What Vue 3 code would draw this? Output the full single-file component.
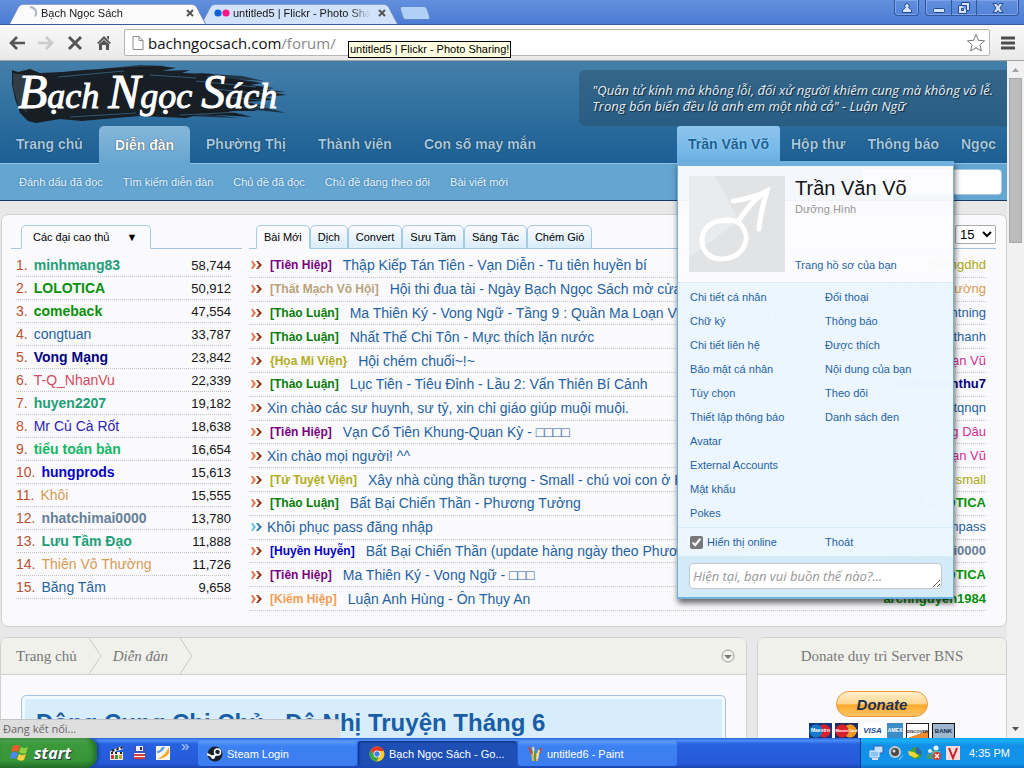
<script setup>
import { ref } from 'vue'

const mainNav = ['Trang chủ', 'Diễn đàn', 'Phường Thị', 'Thành viên', 'Con số may mắn']
const userNav = ['Trần Văn Võ', 'Hộp thư', 'Thông báo', 'Ngọc']
const subNav = ['Đánh dấu đã đọc', 'Tìm kiếm diễn đàn', 'Chủ đề đã đọc', 'Chủ đề đang theo dõi', 'Bài viết mới']
const tabs = ['Bài Mới', 'Dịch', 'Convert', 'Sưu Tầm', 'Sáng Tác', 'Chém Gió']

const members = [
  { name: 'minhmang83', score: '58,744', cls: 'teal' },
  { name: 'LOLOTICA', score: '50,912', cls: 'green' },
  { name: 'comeback', score: '47,554', cls: 'green' },
  { name: 'congtuan', score: '33,787', cls: 'blue' },
  { name: 'Vong Mạng', score: '23,842', cls: 'navy' },
  { name: 'T-Q_NhanVu', score: '22,339', cls: 'rose' },
  { name: 'huyen2207', score: '19,182', cls: 'teal' },
  { name: 'Mr Củ Cà Rốt', score: '18,638', cls: 'indigo' },
  { name: 'tiểu toán bàn', score: '16,654', cls: 'mint' },
  { name: 'hungprods', score: '15,613', cls: 'royal' },
  { name: 'Khôi', score: '15,555', cls: 'tan' },
  { name: 'nhatchimai0000', score: '13,780', cls: 'slate' },
  { name: 'Lưu Tầm Đạo', score: '11,888', cls: 'teal' },
  { name: 'Thiên Vô Thường', score: '11,726', cls: 'tan' },
  { name: 'Băng Tâm', score: '9,658', cls: 'blue' },
]

const topics = [
  { prefix: '[Tiên Hiệp]', pc: 'purple', title: 'Thập Kiếp Tán Tiên - Vạn Diễn - Tu tiên huyền bí', user: 'hoangdhd', uc: 'olive' },
  { prefix: '[Thất Mạch Võ Hội]', pc: 'khaki', title: 'Hội thi đua tài - Ngày Bạch Ngọc Sách mở cửa', user: 'Thiên Vô Thường', uc: 'tan' },
  { prefix: '[Thảo Luận]', pc: 'forest', title: 'Ma Thiên Ký - Vong Ngữ - Tầng 9 : Quần Ma Loạn Vũ - Man Hoang Đại Lục', user: 'LordofLightning', uc: 'blue' },
  { prefix: '[Thảo Luận]', pc: 'forest', title: 'Nhất Thế Chi Tôn - Mực thích lặn nước', user: 'minthanh', uc: 'blue' },
  { prefix: '{Họa Mi Viện}', pc: 'gold', title: 'Hội chém chuối~!~', user: 'Nhạn Vũ', uc: 'pink' },
  { prefix: '[Thảo Luận]', pc: 'forest', title: 'Lục Tiên - Tiêu Đỉnh - Lầu 2: Vấn Thiên Bí Cảnh', user: 'kethattinhthu7', uc: 'navy' },
  { title: 'Xin chào các sư huynh, sư tỷ, xin chỉ giáo giúp muội muội.', user: 'soditimbatqnqn', uc: 'blue' },
  { prefix: '[Tiên Hiệp]', pc: 'purple', title: 'Vạn Cổ Tiên Khung-Quan Kỳ - □□□□', user: 'Sùng Dâu', uc: 'pink' },
  { title: 'Xin chào mọi người! ^^', user: 'Nhạn Vũ', uc: 'pink' },
  { prefix: '[Tứ Tuyệt Viện]', pc: 'gold', title: 'Xây nhà cùng thần tượng - Small - chú voi con ở Bản Đôn nhỏ nhỏ', user: 'small', uc: 'olive' },
  { prefix: '[Thảo Luận]', pc: 'forest', title: 'Bất Bại Chiến Thần - Phương Tưởng', user: 'LOLOTICA', uc: 'green' },
  { title: 'Khôi phục pass đăng nhập', user: 'compass', uc: 'blue', read: true },
  { prefix: '[Huyền Huyễn]', pc: 'royal', title: 'Bất Bại Chiến Thần (update hàng ngày theo Phương Tưởng)', user: 'nhatchimai0000', uc: 'slate' },
  { prefix: '[Tiên Hiệp]', pc: 'purple', title: 'Ma Thiên Ký - Vong Ngữ - □□□', user: 'LOLOTICA', uc: 'green' },
  { prefix: '[Kiếm Hiệp]', pc: 'orange', title: 'Luận Anh Hùng - Ôn Thụy An', user: 'archnguyen1984', uc: 'green' },
]

const menuLeft = ['Chi tiết cá nhân', 'Chữ ký', 'Chi tiết liên hệ', 'Bảo mật cá nhân', 'Tùy chọn', 'Thiết lập thông báo', 'Avatar', 'External Accounts', 'Mật khẩu', 'Pokes']
const menuRight = ['Đối thoại', 'Thông báo', 'Được thích', 'Nội dung của bạn', 'Theo dõi', 'Danh sách đen']

const url = ref('')
const online = ref(true)
const status = ref('')
const search = ref('')
</script>

<template>
  <div class="screen">
    <header class="tabstrip">
      <div class="btab active">
        <svg class="spin" width="16" height="16" viewBox="0 0 16 16"><path d="M8 2a6 6 0 0 1 5 9.500" fill="none" stroke="#a9b6c8" stroke-width="2" /></svg>
        <span class="btitle">Bạch Ngọc Sách</span>
        <button class="bclose" aria-label="Đóng thẻ"><svg width="8" height="8" viewBox="0 0 8 8"><path d="M1 1l6 6M7 1L1 7" stroke="#555" stroke-width="2" /></svg></button>
      </div>
      <div class="btab">
        <svg class="flickr" width="16" height="8" viewBox="0 0 16 8"><circle cx="4" cy="4" r="3.600" fill="#0b63d8" /><circle cx="12" cy="4" r="3.600" fill="#f81484" /></svg>
        <span class="btitle fade">untitled5 | Flickr - Photo Sharing!</span>
        <button class="bclose" aria-label="Đóng thẻ"><svg width="8" height="8" viewBox="0 0 8 8"><path d="M1 1l6 6M7 1L1 7" stroke="#555" stroke-width="2" /></svg></button>
      </div>
      <button class="newtab" aria-label="Thẻ mới"></button>
      <div class="winbtns">
        <button class="user" aria-label="Người dùng"><svg width="12" height="12" viewBox="0 0 12 12"><path d="M6 1.500a2.300 2.300 0 0 1 1.500 4l3 2.500v2.500h-9V8l3-2.500A2.300 2.300 0 0 1 6 1.500z" fill="#d6e3fb" stroke="#234a8c" /></svg></button>
        <div class="group">
          <button aria-label="Thu nhỏ"><svg width="14" height="14" viewBox="0 0 14 14"><rect x="1.500" y="7.500" width="11" height="4" rx="1" fill="#d6e3fb" stroke="#234a8c" /></svg></button>
          <button aria-label="Khôi phục"><svg width="14" height="14" viewBox="0 0 14 14"><path d="M4.500 1.500h8v8h-3v3h-8v-8h3z" fill="#d6e3fb" stroke="#234a8c" /><path d="M9.500 9.500v-5h-5M4.500 7.500h2v2h-2z" fill="#6f98e4" stroke="#234a8c" /></svg></button>
          <button class="x" aria-label="Đóng"><svg width="14" height="14" viewBox="0 0 14 14"><path d="M2 2.500h3.500L7 4.500l1.500-2H12L9 7l3 4.500H8.500L7 9.500l-1.500 2H2L5 7z" fill="#d6e3fb" stroke="#234a8c" /></svg></button>
        </div>
      </div>
    </header>

    <div class="toolbar">
      <button aria-label="Quay lại"><svg width="18" height="18" viewBox="0 0 18 18"><path d="M17 9H4M9 3L3 9l6 6" fill="none" stroke="#555" stroke-width="2.600" /></svg></button>
      <button aria-label="Tiến"><svg width="18" height="18" viewBox="0 0 18 18"><path d="M1 9h13M9 3l6 6-6 6" fill="none" stroke="#cbcbcb" stroke-width="2.600" /></svg></button>
      <button aria-label="Dừng"><svg width="18" height="18" viewBox="0 0 18 18"><path d="M3 3l12 12M15 3L3 15" stroke="#555" stroke-width="3" /></svg></button>
      <button aria-label="Trang chủ"><svg width="18" height="18" viewBox="0 0 18 18"><path d="M9 2l7 7-1.500 1L9 5l-5.500 5L2 9zM12 2h2v4l-2-2zM4 10l5-4 5 4v6h-3v-5H7v5H4z" fill="#555" /></svg></button>
      <label class="omnibox">
        <svg width="14" height="16" viewBox="0 0 14 16"><path d="M2 1.500h6l4 4v9H2zM8 1.500v4h4" fill="#fff" stroke="#8b8b8b" /></svg>
        <span class="url">bachngocsach.com<i>/forum/</i></span>
        <input v-model="url" type="text" aria-label="Địa chỉ">
        <svg width="20" height="20" viewBox="0 0 20 20"><path d="M10 1.500l2.400 5.800 6.200.5-4.700 4.100 1.500 6.100-5.400-3.300L4.600 18l1.500-6.100-4.700-4.100 6.200-.5z" fill="#fff" stroke="#777" /></svg>
      </label>
      <button aria-label="Trình đơn"><svg width="14" height="14" viewBox="0 0 14 14"><path d="M1 2h12M1 7h12M1 12h12" stroke="#4d4d4d" stroke-width="3" stroke-linecap="round" /></svg></button>
    </div>
    <div class="tooltip" role="tooltip">untitled5 | Flickr - Photo Sharing!</div>

    <div class="viewport">
      <div class="page">
        <div class="head">
          <div class="brand">
            <svg class="logo" width="290" height="64" viewBox="0 0 290 64">
              <path d="M12 9L18 11L30 8L40 12L62 11L84 9L120 7L160 5L176 7L162 10L190 9L182 12L214 13L206 16L236 18L262 22L250 24L274 27L256 29L287 34L262 36L276 39L244 41L268 45L232 45L258 50L228 50L252 56L200 53L186 57L140 55L104 58L82 60L60 58L36 62L28 60L20 52L15 38L12 24Z" fill="#15181b" opacity=".93" />
              <path d="M100 8l40-4 26 1-20 3zM196 12l46 3 22 5-50-3zM232 24l54 7-40 2zM196 50l40 1-20 3 22 3-52-2zM232 42l36 5 18 5-50-5z" fill="#15181b" opacity=".7" />
              <path d="M58 16l66-6M150 14l46 3M196 20l60 6M206 27l66 7M180 54l60-3M70 56l66-4M226 36l46 4" stroke="#447fa9" stroke-width="1" opacity=".6" />
              <path d="M13 12l12 2 2 38-9-8-5-18z" fill="#4a5963" opacity=".5" />
              <text x="18" y="47" class="logotext"><tspan class="cap">B</tspan>ạch <tspan class="cap">N</tspan>gọc <tspan class="cap">S</tspan>ách</text>
            </svg>
            <blockquote>"Quân tử kính mà không lỗi, đối xử người khiêm cung mà không vô lễ.<br>Trong bốn biển đều là anh em một nhà cả" - Luận Ngữ</blockquote>
          </div>
          <nav class="nav">
            <a v-for="(item, i) in mainNav" :key="item" href="#" :class="{ current: i === 1 }">{{ item }}</a>
            <span class="spacer"></span>
            <div v-for="(item, i) in userNav" :key="item" class="userlink" :class="{ open: i === 0 }">
              <a href="#">{{ item }}</a>
              <section v-if="i === 0" class="menu">
                <div class="profile">
                  <svg class="avatar" width="96" height="96" viewBox="0 0 96 96">
                    <rect width="96" height="96" fill="#e2e3e5" />
                    <path d="M0 0h26l24 44L0 82z" fill="#eaebed" />
                    <path d="M36 44c18-2 26 16 18 28-8 13-30 15-38 3-9-14 2-34 24-30M50 44c7-10 16-22 27-29M44 25c13-2 24-5 34-10-4 13-7 25-8 38" fill="none" stroke="#fff" stroke-width="5" stroke-linecap="round" />
                  </svg>
                  <div class="who">
                    <h3>Trần Văn Võ</h3>
                    <span>Dưỡng Hình</span>
                    <a href="#">Trang hồ sơ của bạn</a>
                  </div>
                </div>
                <div class="links">
                  <ul><li v-for="l in menuLeft" :key="l"><a href="#">{{ l }}</a></li></ul>
                  <ul><li v-for="l in menuRight" :key="l"><a href="#">{{ l }}</a></li></ul>
                </div>
                <div class="links last">
                  <label><input v-model="online" type="checkbox"> Hiển thị online</label>
                  <a href="#">Thoát</a>
                </div>
                <div class="statusbox">
                  <textarea v-model="status" placeholder="Hiện tại, bạn vui buồn thế nào?..." aria-label="Trạng thái"></textarea>
                </div>
              </section>
            </div>
          </nav>
        </div>
        <nav class="subnav">
          <a v-for="item in subNav" :key="item" href="#">{{ item }}</a>
          <input v-model="search" type="search" aria-label="Tìm kiếm">
        </nav>

        <main>
          <section class="card board">
            <div class="rank">
              <div class="tabrow"><button class="tab on pick">Các đại cao thủ <span>▼</span></button></div>
              <ol>
                <li v-for="(m, i) in members" :key="m.name">
                  <span class="num">{{ i + 1 }}.</span>
                  <a href="#" :class="m.cls">{{ m.name }}</a>
                  <span class="score">{{ m.score }}</span>
                </li>
              </ol>
            </div>
            <div class="latest">
              <div class="tabrow">
                <button v-for="(t, i) in tabs" :key="t" class="tab" :class="{ on: i === 0 }">{{ t }}</button>
                <span class="pagesize"><select aria-label="Số bài"><option>15</option></select></span>
              </div>
              <ul>
                <li v-for="(t, i) in topics" :key="i">
                  <svg width="12" height="8" viewBox="0 0 12 8" :class="{ read: t.read }"><path class="a" d="M1 0h2l3 4-3 4H1l2-4z" /><path class="b" d="M6 0h2l4 4-4 4H6l3-4z" /></svg>
                  <a v-if="t.prefix" href="#" class="prefix" :class="t.pc">{{ t.prefix }}</a>
                  <a href="#" class="title">{{ t.title }}</a>
                  <a href="#" class="poster" :class="t.uc">{{ t.user }}</a>
                </li>
              </ul>
            </div>
          </section>

          <div class="lower">
            <section class="card forum">
              <div class="crumbs">
                <a href="#">Trang chủ</a>
                <svg width="14" height="36" viewBox="0 0 14 36"><path d="M1 0l12 18L1 36" fill="none" stroke="#c9c9c9" /></svg>
                <a href="#"><i>Diễn đàn</i></a>
                <svg width="14" height="36" viewBox="0 0 14 36"><path d="M1 0l12 18L1 36" fill="none" stroke="#c9c9c9" /></svg>
                <button aria-label="Mở rộng"><svg width="14" height="14" viewBox="0 0 14 14"><circle cx="7" cy="7" r="6" fill="none" stroke="#999" /><path d="M3 6h8L7 10z" fill="#777" /></svg></button>
              </div>
              <div class="notice"><h2>Đông Cung Chi Chủ - Đệ Nhị Truyện Tháng 6</h2></div>
            </section>
            <aside class="card donate">
              <h4>Donate duy trì Server BNS</h4>
              <button class="paypal">Donate</button>
              <div class="cards">
                <span class="maestro">Maestro</span>
                <span class="master">MasterCard</span>
                <span class="visa">VISA</span>
                <span class="amex">AMEX</span>
                <span class="disc">DISCOVER</span>
                <span class="bank">BANK</span>
              </div>
            </aside>
          </div>
        </main>
      </div>
      <div class="scroll">
        <svg width="17" height="17" viewBox="0 0 17 17"><path d="M5 11h7L8.500 7z" fill="#a3a3a3" /></svg>
        <div class="thumb"></div>
        <svg width="17" height="17" viewBox="0 0 17 17"><path d="M5 6h7l-3.500 4z" fill="#505050" /></svg>
      </div>
      <div class="loading">Đang kết nối...</div>
    </div>

    <footer class="taskbar">
      <button class="start">
        <svg width="20" height="20" viewBox="0 0 20 20"><path d="M3 3q3-2 7 0L8 9Q5 7 1 9z" fill="#ee5a2c" /><path d="M11 4q3 2 7 0l-2 6q-4 2-7-1z" fill="#8ed13b" /><path d="M1 10q3-2 7 0l-2 6q-3-2-6 0z" fill="#4c86ee" /><path d="M9 11q3 2 7 0l-2 6q-4 2-7-1z" fill="#fbd13a" /></svg>
        start
      </button>
      <div class="quick">
        <svg width="16" height="16" viewBox="0 0 16 16"><path d="M1 6l12-5 1 3L2 8zM1 7h13v8H1z" fill="#eee" /><path d="M2 6l2-2 2 1-2 2zM7 4l2-2 1 2-2 2zM11 2l2-1 1 2-2 1zM2 7h2v2H2zM6 7h2v2H6zM11 7h2v2h-2z" fill="#222" /><path d="M2 10h3v4H2z" fill="#d33" /><path d="M6 10h3v4H6z" fill="#393" /><path d="M10 10h3v4h-3z" fill="#c93" /></svg>
        <svg width="16" height="16" viewBox="0 0 16 16"><path d="M1 1h13v14H1z" fill="#3a53c4" /><path d="M4 1h7v5H4z" fill="#eef" /><path d="M8 2h2v3H8z" fill="#234" /><path d="M2 8h11v6H2z" fill="#fff" /><path d="M2 9h11v2H2zM2 12h11v2H2z" fill="#d43d36" /></svg>
        <svg width="16" height="16" viewBox="0 0 16 16"><rect x="1" y="1" width="14" height="14" fill="#f8f6ec" /><path d="M2 14Q9 12 14 2v6q-4 6-12 6z" fill="#f1a72e" /><path d="M2 8q5 0 8-6H7Q5 6 2 6z" fill="#5b9ee8" /></svg>
        <span>»</span>
      </div>
      <div class="tasks">
        <button>
          <svg width="16" height="16" viewBox="0 0 16 16"><circle cx="8" cy="8" r="7.500" fill="#18202c" /><circle cx="10.500" cy="6" r="3" fill="none" stroke="#fff" stroke-width="1.500" /><path d="M0 8l6 3 4-3" stroke="#fff" stroke-width="2" fill="none" /><circle cx="6" cy="11" r="2" fill="#fff" /></svg>
          Steam Login
        </button>
        <button class="down">
          <svg width="16" height="16" viewBox="0 0 16 16"><circle cx="8" cy="8" r="7.500" fill="#f7c92f" /><path d="M1.500 4.300A7.500 7.500 0 0 1 15 5H8L5 9z" fill="#e2382b" /><path d="M1.500 4.300A7.500 7.500 0 0 0 7.500 15.500L11 9H5z" fill="#37a346" /><circle cx="8" cy="8" r="3.500" fill="#fff" /><circle cx="8" cy="8" r="2.700" fill="#3f7fe0" /></svg>
          Bạch Ngọc Sách - Go...
        </button>
        <button>
          <svg width="16" height="16" viewBox="0 0 16 16"><path d="M4 7h8l-1 8H5z" fill="#dcae71" /><path d="M5 8L2 1M12 8l2-6" stroke="#c9492e" stroke-width="2" /><path d="M7 8L6 1M10 13l2-9" stroke="#e9e3a0" stroke-width="2" /><path d="M8 15V5" stroke="#5d9b43" stroke-width="2" /></svg>
          untitled6 - Paint
        </button>
      </div>
      <div class="tray">
        <svg width="16" height="16" viewBox="0 0 16 16"><path d="M5 1h9v7H5z" fill="#bfe0ff" stroke="#2d5fae" /><path d="M1 6h9v6H1z" fill="#8cc4fa" stroke="#e8f3ff" /><path d="M3 14h6" stroke="#dde" stroke-width="2" /></svg>
        <svg width="16" height="16" viewBox="0 0 16 16"><circle cx="7" cy="7" r="6" fill="#c9c9c9" /><circle cx="7" cy="7" r="4" fill="#4a4a4a" /><circle cx="6" cy="6" r="1.500" fill="#ddd" /><path d="M11 15l4-5" stroke="#9cc8f3" stroke-width="1" /></svg>
        <svg width="16" height="16" viewBox="0 0 16 16"><circle cx="9" cy="8" r="6" fill="#36a13a" /><path d="M9 2a6 6 0 0 1 5 8l-5-2z" fill="#2e62bd" /><path d="M1 6l6 1 5 4-4 2-6-3z" fill="#f2d737" /></svg>
        <svg width="16" height="16" viewBox="0 0 16 16"><circle cx="10" cy="3" r="2.500" fill="#e7f4ef" /><path d="M6 6h8v5H6z" fill="#66b7a1" /><circle cx="4" cy="6" r="2" fill="#e7f4ef" /><path d="M1 9h7v5H1z" fill="#4a9c75" /><circle cx="11" cy="11" r="4" fill="#e0352b" /><path d="M9 9l4 4M13 9l-4 4" stroke="#fff" stroke-width="1.500" /></svg>
        <svg width="16" height="16" viewBox="0 0 16 16"><rect x="1" y="1" width="14" height="14" fill="#f9dcdc" /><path d="M4 3l4 10 4-10" fill="none" stroke="#c8202e" stroke-width="2" /></svg>
        <time>4:35 PM</time>
      </div>
    </footer>
  </div>
</template>

<style>
body {
  margin: 0;
  overflow: hidden;
}
</style>

<style scoped>
.screen {
  position: relative;
  display: flex;
  flex-direction: column;
  height: 100vh;
  font-family: 'Liberation Sans', Arial, sans-serif;
  font-size: 11px;
  color: #141414;
}
.screen * {
  box-sizing: border-box;
}
svg {
  display: block;
  flex: none;
}
a {
  color: #1f62a0;
  text-decoration: none;
}
button {
  font: inherit;
  border: 0;
  padding: 0;
  background: none;
}
ul,
ol {
  list-style: none;
  margin: 0;
  padding: 0;
}

/* browser frame */
.tabstrip {
  display: flex;
  flex: none;
  height: 25px;
  padding-left: 4px;
  background: linear-gradient(#6390dd, #4b7bd4);
  border-bottom: 1px solid #35599b;
}
.btab {
  position: relative;
  z-index: 1;
  display: flex;
  align-items: center;
  gap: 3px;
  width: 204px;
  height: 24px;
  padding: 2px 10px 0 18px;
}
.btab::before {
  content: '';
  position: absolute;
  inset: 1px 2px 0 5px;
  z-index: -1;
  background: #d3e2fb;
  border: 1px solid #6a87bd;
  border-bottom: 0;
  border-radius: 5px 5px 0 0;
  transform: perspective(40px) rotateX(12deg);
  transform-origin: bottom;
}
.btab.active {
  z-index: 2;
}
.btab.active::before {
  background: #fbfbfc;
}
.btab:nth-child(2) {
  margin-left: -12px;
}
.btitle {
  flex: 1;
  overflow: hidden;
  white-space: nowrap;
}
.fade {
  mask-image: linear-gradient(90deg, #000 85%, transparent);
}
.bclose {
  padding: 4px;
}
.newtab {
  width: 28px;
  height: 14px;
  margin: 6px 0 0 1px;
  background: #b1d0f7;
  border: 1px solid #5f86c8;
  border-radius: 3px;
  transform: skewX(18deg);
}
.winbtns {
  display: flex;
  gap: 6px;
  margin: 0 5px 0 auto;
  height: 16px;
}
.winbtns button {
  display: grid;
  place-items: center;
  width: 25px;
}
.user,
.group {
  border: 1px solid #2f579e;
  border-top: 0;
  border-radius: 0 0 4px 4px;
  box-shadow: inset 0 0 0 1px #7ea4ea;
}
.group {
  display: flex;
}
.group button + button {
  border-left: 1px solid #2f579e;
}
.winbtns .x {
  width: 42px;
}
.toolbar {
  display: flex;
  align-items: center;
  flex: none;
  gap: 11px;
  height: 36px;
  padding: 0 9px 0 8px;
  background: linear-gradient(#f9f9f9, #e9e9e9);
  border-bottom: 1px solid #a2a2a2;
}
.omnibox {
  display: flex;
  flex: 1;
  align-items: center;
  gap: 3px;
  height: 27px;
  padding: 0 3px 0 6px;
  background: #fff;
  border: 1px solid #b5b5b5;
  border-radius: 2px;
  font-family: 'Open Sans', sans-serif;
  font-size: 15px;
  color: #111;
}
.url i {
  font-style: normal;
  color: #888;
}
.omnibox input {
  flex: 1;
  min-width: 0;
  border: 0;
  outline: 0;
  background: none;
}
.tooltip {
  position: absolute;
  left: 348px;
  top: 41px;
  z-index: 20;
  padding: 0 1px;
  border: 1px solid #000;
  background: #ffffe1;
  line-height: 15px;
  color: #000;
}

.viewport {
  position: relative;
  display: flex;
  flex: 1;
  min-height: 0;
  overflow: hidden;
}
.page {
  flex: 1;
  min-width: 0;
  background: #e8e8e8;
}
.scroll {
  display: flex;
  flex-direction: column;
  width: 17px;
  background: #f1f1f1;
}
.scroll .thumb {
  height: 165px;
  margin: 0 2px auto;
  background: #bcbcbc;
  border: 1px solid #a8a8a8;
}

/* site header */
.head {
  background: linear-gradient(#447fa9, #1b5f94);
}
.brand {
  display: flex;
  justify-content: space-between;
  height: 65px;
}
.logotext {
  font: italic 36px 'Liberation Serif', serif;
  fill: #fff;
  stroke: #fff;
}
.cap {
  font-size: 48px;
}
blockquote {
  margin: 9px 0 0;
  padding: 12px 14px 12px 13px;
  border-radius: 6px 0 0 6px;
  background: rgba(40, 80, 108, 0.5);
  color: #e6f1f8;
  font: italic 13px/16px 'Open Sans', sans-serif;
  text-shadow: 1px 1px 1px #123;
  white-space: nowrap;
}
.nav {
  display: flex;
  height: 38px;
  border-bottom: 1px solid #8bc1e6;
  font-size: 14px;
  font-weight: bold;
  line-height: 36px;
}
.nav > a {
  padding: 0 16px;
  color: #a5cae4;
  text-shadow: 0 0 1px #000;
}
.nav > a.current {
  height: 39px;
  padding-top: 1px;
  border-radius: 5px 5px 0 0;
  background: linear-gradient(#86b7da, #65a5d1);
  color: #fff;
}
.spacer {
  flex: 1;
}
.userlink {
  position: relative;
}
.userlink > a {
  display: block;
  padding: 0 11px;
  color: #a5cae4;
  text-shadow: 0 0 1px #000;
}
.userlink.open > a {
  background: linear-gradient(#8cc5ee, #6cb2e4);
  border-radius: 3px 3px 0 0;
  color: #176093;
  text-shadow: 0 0 2px #b8e0fb;
}
.subnav {
  display: flex;
  align-items: center;
  gap: 20px;
  height: 37px;
  padding: 0 5px 0 19px;
  background: #65a5d1;
  border-bottom: 1px solid #143b62;
}
.subnav a {
  color: #eaf5fc;
  text-shadow: 0 0 2px #2b6b99;
}
.subnav input {
  width: 140px;
  height: 26px;
  margin-left: auto;
  border: 1px solid #a5cae4;
  border-radius: 4px;
  background: #fff;
}

/* profile drop-down */
.menu {
  position: absolute;
  left: 0;
  top: 35px;
  z-index: 10;
  width: 277px;
  border: solid #6fb0de;
  border-width: 5px 1px 2px;
  background: rgba(252, 252, 255, 0.95);
  box-shadow: 1px 4px 6px rgba(0, 0, 0, 0.6);
  font-size: 11px;
  font-weight: normal;
  line-height: 24px;
}
.profile {
  display: flex;
  gap: 10px;
  padding: 10px 11px;
  border-bottom: 1px solid #d7edfc;
}
.who {
  display: flex;
  flex-direction: column;
  line-height: 14px;
}
.who h3 {
  margin: 0 0 2px;
  font-size: 20px;
  font-weight: normal;
  line-height: 24px;
}
.who span {
  color: #969696;
}
.who a {
  margin-top: auto;
}
.links {
  display: grid;
  grid-template-columns: 135px 1fr;
  padding: 2px 12px;
  background: rgba(230, 244, 255, 0.7);
  border-bottom: 1px solid #d7edfc;
}
.links label {
  display: flex;
  align-items: center;
  gap: 4px;
  color: #1f62a0;
}
.links input {
  width: 13px;
  height: 13px;
  margin: 0;
  accent-color: #777;
}
.statusbox {
  padding: 6px 11px 8px;
  background: #d3eaf8;
}
textarea {
  display: block;
  width: 100%;
  height: 26px;
  padding: 3px;
  border: 1px solid #c0c8ce;
  border-radius: 4px;
  font: italic 13px/18px 'Open Sans', sans-serif;
}
textarea::placeholder {
  color: #969696;
}

/* content */
main {
  padding: 13px 0 0 1px;
}
.card {
  background: #fafafd;
  border: 1px solid #d0d0d0;
  border-radius: 7px;
}
.board {
  display: flex;
  gap: 7px;
  padding: 10px 10px 15px 9px;
}
.rank {
  width: 231px;
}
.latest {
  flex: 1;
  min-width: 0;
}
.tabrow {
  display: flex;
  height: 24px;
  padding: 0 0 0 10px;
  border-bottom: 1px solid #a5c5dd;
}
.tab {
  height: 24px;
  padding: 0 7px;
  border: 1px solid #a5cae4;
  border-radius: 5px 5px 0 0;
  background: linear-gradient(#fafafd, #d9edfb);
}
.tab.on {
  border-bottom-color: #fafafd;
  background: #fafafd;
}
.latest .tabrow {
  padding-left: 7px;
}
.tab.pick {
  padding: 0 13px 0 11px;
}
.pick span {
  margin-left: 14px;
}
.pagesize {
  margin-left: auto;
}
select {
  display: block;
  width: 41px;
  height: 19px;
  padding: 0;
  border: 1px solid #aaa;
  border-radius: 2px;
  background: #fff;
  font: 13px 'Liberation Sans', sans-serif;
}
.rank ol {
  padding: 5px 11px 0 5px;
}
.rank li {
  display: flex;
  gap: 6px;
  height: 23px;
  border-bottom: 1px dotted #c4c4c4;
  font-size: 14px;
  line-height: 23px;
}
.num {
  color: #b8512c;
}
.score {
  margin-left: auto;
  font-size: 13px;
}
.latest ul {
  display: flex;
  flex-direction: column;
  min-height: 362px;
  padding: 5px 10px 0 1px;
}
.latest li {
  display: flex;
  flex: 1;
  align-items: center;
  border-bottom: 1px dotted #c4c4c4;
  font-size: 14px;
  line-height: 22px;
  white-space: nowrap;
}
.latest li svg {
  margin-right: 5px;
}
.a {
  fill: #e08055;
}
.b {
  fill: #8d3519;
}
.read .a {
  fill: #6cc4e4;
}
.read .b {
  fill: #2a7ba6;
}
.prefix {
  margin: 0 11px 0 3px;
  font-size: 12px;
  font-weight: bold;
}
.poster {
  margin-left: auto;
  font-size: 13px;
}
.teal { color: #1f9e78; font-weight: bold; }
.green { color: #099009; font-weight: bold; }
.navy { color: #000080; font-weight: bold; }
.mint { color: #12b863; font-weight: bold; }
.royal { color: #0202c6; font-weight: bold; }
.slate { color: #667f99; font-weight: bold; }
.rose { color: #d2495f; }
.indigo { color: #2d22b0; }
.tan { color: #d79b53; }
.olive { color: #a9aa12; }
.pink { color: #d22f97; }
.purple { color: #78007c; }
.khaki { color: #b9a27c; }
.forest { color: #087d08; }
.gold { color: #b1ae17; }
.orange { color: #f49d50; }

.lower {
  display: flex;
  gap: 10px;
  margin-top: 10px;
}
.forum {
  flex: 1;
  margin-left: -1px;
  overflow: hidden;
}
.crumbs,
.donate h4 {
  display: flex;
  align-items: center;
  height: 37px;
  margin: 0;
  background: #f1f1ec;
  border-bottom: 1px solid #d0d0d0;
  font: 15px 'Liberation Serif', serif;
}
.crumbs {
  gap: 11px;
  padding: 0 11px 0 15px;
}
.crumbs a,
.donate h4 {
  color: #777;
}
.crumbs button {
  margin-left: auto;
}
.notice {
  height: 80px;
  margin: 20px;
  padding: 12px 14px;
  border: 1px solid #a5c5dd;
  border-radius: 5px;
  background: #d7edfc;
  box-shadow: inset 0 0 0 3px #f2f9fe;
}
h2 {
  margin: 0;
  font-size: 24px;
  line-height: 30px;
  color: #1a5ea6;
  white-space: nowrap;
}
.donate {
  display: flex;
  flex-direction: column;
  align-items: center;
  width: 250px;
  overflow: hidden;
}
.donate h4 {
  align-self: stretch;
  justify-content: center;
}
.paypal {
  width: 92px;
  height: 26px;
  margin: 16px 0 6px;
  border: 1px solid #e9973a;
  border-radius: 13px;
  background: linear-gradient(#fff0cf, #fdd48b 48%, #fba92b 55%, #fdc566);
  color: #1d3052;
  font-size: 15px;
  font-weight: bold;
  font-style: italic;
}
.cards {
  display: flex;
  gap: 3px;
}
.cards span {
  width: 23px;
  height: 16px;
  color: #fff;
  font-size: 5px;
  font-weight: bold;
  line-height: 15px;
  text-align: center;
}
.maestro { background: radial-gradient(circle at 7px 8px, #1678c8 6px, transparent 7px), radial-gradient(circle at 15px 8px, #d8202c 6px, #12357c 7px); }
.cards .master { font-size: 4px; background: radial-gradient(circle at 7px 8px, #d8202c 6px, transparent 7px), radial-gradient(circle at 15px 8px, #f19a22 6px, #222c62 7px); }
.cards .visa { background: #fff; color: #1a4b94; font-size: 8px; font-style: italic; }
.cards .amex { width: 16px; background: #3c8dc6; }
.cards .disc { border: 1px solid #222; background: linear-gradient(160deg, #fff 65%, #ef8a2f 66%); color: #222; font-size: 4px; }
.cards .bank { border: 1px solid #111; background: #9fb7cd; color: #14294a; font-size: 6px; }
.loading {
  position: absolute;
  left: 0;
  bottom: 0;
  width: 340px;
  height: 19px;
  padding-left: 3px;
  border-top: 1px solid #c4c4c4;
  border-radius: 0 4px 0 0;
  background: #dedede;
  color: #666;
  font-family: 'Open Sans', sans-serif;
  line-height: 17px;
}

/* XP taskbar */
.taskbar {
  display: flex;
  flex: none;
  height: 30px;
  background: linear-gradient(#2a62d8, #4b8ef5 8%, #2762e0 20%, #2459d8 85%, #1b44ae);
  color: #fff;
}
.start {
  display: flex;
  align-items: center;
  gap: 4px;
  width: 97px;
  padding-left: 10px;
  border-radius: 0 10px 12px 0;
  background: linear-gradient(#5fae5c, #3c9a3a 20%, #37963a 75%, #24702a);
  box-shadow: inset -3px 0 5px #236c25, 2px 0 3px #1742a0;
  color: #fff;
  font-family: 'Open Sans', sans-serif;
  font-size: 16px;
  font-weight: bold;
  font-style: italic;
  text-shadow: 1px 1px 1px #234;
}
.quick {
  display: flex;
  align-items: center;
  gap: 7px;
  width: 101px;
  padding-left: 12px;
}
.quick span {
  align-self: flex-start;
  margin-left: 3px;
  font-size: 15px;
  line-height: 16px;
  color: #bcd4fb;
}
.tasks {
  display: flex;
  flex: 1;
  gap: 1px;
  padding: 3px 0 2px;
}
.tasks button {
  display: flex;
  align-items: center;
  gap: 4px;
  width: 159px;
  padding-left: 9px;
  border-radius: 3px;
  background: linear-gradient(#5d9bfb, #3c81f3 20%, #3b7df0);
  color: #fff;
}
.tasks .down {
  padding-left: 11px;
  background: #1e4fb5;
  box-shadow: inset 1px 1px 2px #0e2f7c;
}
.tray {
  display: flex;
  align-items: center;
  gap: 3px;
  width: 164px;
  padding-left: 8px;
  border-left: 1px solid #0c3f92;
  background: linear-gradient(#16a0ee, #19b0f5 8%, #1290e8 25%, #1193ea 85%, #0d6fc4);
}
.tray time {
  margin-left: 5px;
}
</style>
